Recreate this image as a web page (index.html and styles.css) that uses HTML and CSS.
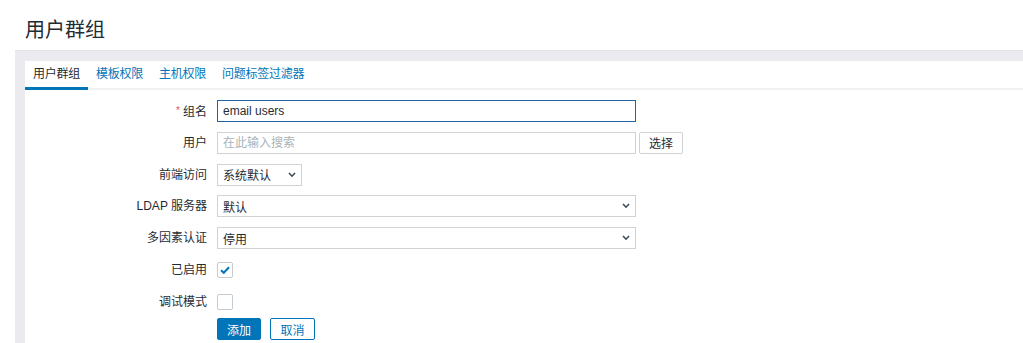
FILE: index.html
```html
<!DOCTYPE html>
<html lang="zh">
<head>
<meta charset="utf-8">
<title>用户群组</title>
<link rel="stylesheet" href="styles.css">
</head>
<body>
<header class="page-header"><h1 class="title">用户群组</h1></header>
<main class="wrapper">
  <div class="panel">
    <ul class="tabs">
      <li class="tab active">用户群组</li>
      <li class="tab">模板权限</li>
      <li class="tab">主机权限</li>
      <li class="tab">问题标签过滤器</li>
    </ul>
    <form class="form">
      <div class="grid">
        <label class="lbl"><span class="req">*</span>组名</label>
        <div class="field"><input class="text w-lg focused" type="text" value="email users"></div>

        <label class="lbl">用户</label>
        <div class="field"><input class="text w-lg" type="text" placeholder="在此输入搜索"><button type="button" class="btn-sel">选择</button></div>

        <label class="lbl">前端访问</label>
        <div class="field"><div class="select w-sm"><span>系统默认</span><svg class="chev" width="8" height="6" viewBox="0 0 8 6"><polyline points="1,1 4,4.2 7,1" fill="none" stroke="#3d4a54" stroke-width="1.6"/></svg></div></div>

        <label class="lbl">LDAP 服务器</label>
        <div class="field"><div class="select w-lg"><span>默认</span><svg class="chev" width="8" height="6" viewBox="0 0 8 6"><polyline points="1,1 4,4.2 7,1" fill="none" stroke="#3d4a54" stroke-width="1.6"/></svg></div></div>

        <label class="lbl">多因素认证</label>
        <div class="field"><div class="select w-lg"><span>停用</span><svg class="chev" width="8" height="6" viewBox="0 0 8 6"><polyline points="1,1 4,4.2 7,1" fill="none" stroke="#3d4a54" stroke-width="1.6"/></svg></div></div>

        <label class="lbl">已启用</label>
        <div class="field"><span class="check"><svg width="14" height="14" viewBox="0 0 14 14"><polyline points="3,7.2 5.8,9.8 11,4.2" fill="none" stroke="#0275b8" stroke-width="2"/></svg></span></div>

        <label class="lbl">调试模式</label>
        <div class="field"><span class="check"></span></div>
      </div>
      <div class="actions">
        <button type="button" class="btn primary">添加</button>
        <button type="button" class="btn alt">取消</button>
      </div>
    </form>
  </div>
</main>
</body>
</html>
```
FILE: styles.css
```css
html, body {
  margin: 0;
  padding: 0;
  background: #ffffff;
  height: 343px;
  overflow: hidden;
  font-family: "Liberation Sans", "Noto Sans CJK SC", sans-serif;
  font-size: 12px;
  color: #1f2c33;
}

.page-header {
  height: 50px;
  box-sizing: border-box;
  padding: 20px 0 0 25px;
}

.title {
  margin: 0;
  font-size: 20px;
  line-height: 20px;
  font-weight: normal;
  color: #1f2c33;
}

.wrapper {
  display: block;
  margin-left: 15px;
  padding: 10px 0 0 10px;
  background: #ebebef;
  border-top: 1px solid #e1e2e6;
  height: 293px;
  box-sizing: border-box;
}

.panel {
  background: #ffffff;
  height: 100%;
}

.tabs {
  display: flex;
  margin: 0;
  padding: 0;
  list-style: none;
  border-bottom: 2px solid #f0f1f3;
}

.tab {
  height: 26px;
  line-height: 26px;
  padding: 0 8px;
  letter-spacing: -0.25px;
  color: #0275b8;
  border-bottom: 3px solid transparent;
  margin-bottom: -2px;
}

.tab.active {
  color: #1f2c33;
  border-bottom-color: #0275b8;
}

.form {
  padding-top: 10px;
}

.grid {
  display: grid;
  grid-template-columns: 182px auto;
  column-gap: 10px;
  row-gap: 9.75px;
  grid-auto-rows: 22px;
  align-items: center;
}

.lbl {
  text-align: right;
  line-height: 22px;
  white-space: nowrap;
}

.req {
  color: #e45959;
  font-size: 10px;
  margin-right: 3px;
  vertical-align: 2px;
}

.field {
  display: flex;
  align-items: center;
  height: 22px;
}

.text {
  height: 22px;
  box-sizing: border-box;
  border: 1px solid #cdd3d7;
  padding: 0 5px;
  margin: 0;
  font-family: inherit;
  font-size: 12px;
  color: #1f2c33;
  background: #ffffff;
  outline: none;
}

.text::placeholder {
  color: #a9b4ba;
}

.text.focused {
  border-color: #1f65a6;
}

.w-lg { width: 419px; }
.w-sm { width: 85px; }

.btn-sel {
  margin-left: 3px;
  width: 44px;
  height: 22px;
  box-sizing: border-box;
  border: 1px solid #cdd3d7;
  border-radius: 2px;
  background: #ffffff;
  font-family: inherit;
  font-size: 12px;
  color: #1f2c33;
  padding: 0;
}

.select {
  height: 22px;
  box-sizing: border-box;
  border: 1px solid #cdd3d7;
  padding: 0 5px;
  display: flex;
  align-items: center;
  justify-content: space-between;
  background: #ffffff;
}

.chev {
  display: block;
}

.check {
  width: 16px;
  height: 16px;
  box-sizing: border-box;
  border: 1px solid #c5ccd1;
  border-radius: 2px;
  display: flex;
  align-items: center;
  justify-content: center;
  background: #ffffff;
}

.check svg { display: block; }

.actions {
  display: flex;
  gap: 9px;
  padding-left: 192px;
  margin-top: 5.5px;
}

.btn {
  height: 22px;
  box-sizing: border-box;
  border-radius: 2px;
  font-family: inherit;
  font-size: 12px;
  padding: 0;
}

.btn.primary {
  width: 44px;
  background: #0275b8;
  border: 1px solid #0275b8;
  color: #ffffff;
}

.btn.alt {
  width: 45px;
  background: #ffffff;
  border: 1px solid #0275b8;
  color: #0275b8;
}
```
